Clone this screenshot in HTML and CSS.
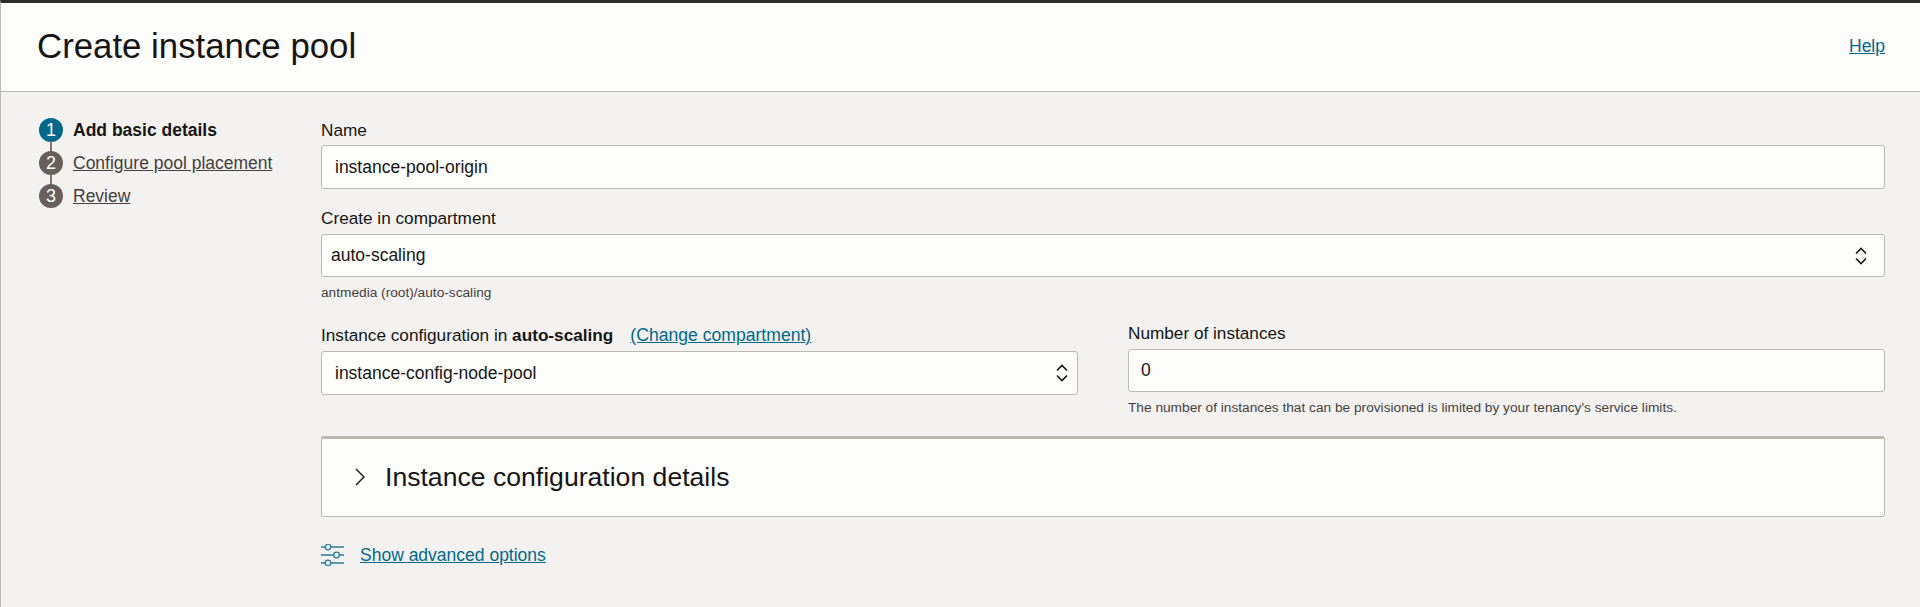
FILE: index.html
```html
<!DOCTYPE html>
<html lang="en">
<head>
<meta charset="utf-8">
<title>Create instance pool</title>
<link rel="stylesheet" href="styles.css">
</head>
<body>
<div class="page">
  <header class="header">
    <h1 class="title">Create instance pool</h1>
    <a class="link help" href="#">Help</a>
  </header>
  <main class="main">
    <nav class="steps">
      <div class="step current"><span class="num">1</span><span class="step-label">Add basic details</span></div>
      <div class="step"><span class="num">2</span><a class="step-label" href="#">Configure pool placement</a></div>
      <div class="step"><span class="num">3</span><a class="step-label" href="#">Review</a></div>
    </nav>
    <form class="form">
      <div class="field field-name">
        <div class="label">Name</div>
        <div class="box box-input">instance-pool-origin</div>
      </div>
      <div class="field field-comp">
        <div class="label">Create in compartment</div>
        <div class="box box-select">auto-scaling
          <svg class="updown" viewBox="0 0 12 18" width="12" height="18"><path d="M1 6.5l5-5 5 5M1 11.5l5 5 5-5" fill="none" stroke="#161513" stroke-width="1.6"/></svg>
        </div>
        <div class="hint">antmedia (root)/auto-scaling</div>
      </div>
      <div class="row">
        <div class="field col-left">
          <div class="label">Instance configuration in <b>auto-scaling</b><a class="link change" href="#">(Change compartment)</a></div>
          <div class="box box-input box-tall">instance-config-node-pool
            <svg class="updown" viewBox="0 0 12 18" width="12" height="18"><path d="M1 6.5l5-5 5 5M1 11.5l5 5 5-5" fill="none" stroke="#161513" stroke-width="1.6"/></svg>
          </div>
        </div>
        <div class="field col-right">
          <div class="label">Number of instances</div>
          <div class="box box-input">0</div>
          <div class="hint">The number of instances that can be provisioned is limited by your tenancy's service limits.</div>
        </div>
      </div>
      <section class="panel">
        <svg class="chev" viewBox="0 0 12 20" width="12" height="20"><path d="M2 2l8 8-8 8" fill="none" stroke="#161513" stroke-width="1.4"/></svg>
        <h2 class="panel-title">Instance configuration details</h2>
      </section>
      <div class="advanced">
        <svg class="sliders" viewBox="0 0 23 22" width="23" height="22">
          <g fill="none" stroke="#2a7c99" stroke-width="1.3">
            <path d="M0 3h4M10 3h13M0 11h12.500M18.500 11h4.500M0 19h4M10 19h13"/>
            <circle cx="7" cy="3" r="2.800"/><circle cx="15.500" cy="11" r="2.800"/><circle cx="7" cy="19" r="2.800"/>
          </g>
        </svg>
        <a class="link" href="#">Show advanced options</a>
      </div>
    </form>
  </main>
</div>
</body>
</html>
```
FILE: styles.css
```css
* { box-sizing: border-box; }
html, body { margin: 0; height: 100%; }
body {
  font-family: "Liberation Sans", Arial, sans-serif;
  font-size: 17.5px;
  color: #161513;
  background: #f3f2f1;
  overflow: hidden;
}
.page {
  height: 607px;
  border-top: 3px solid #312d2a;
  border-left: 1px solid #bcb8b3;
  display: flex;
  flex-direction: column;
}
.header {
  height: 89px;
  flex: none;
  background: #fdfdfc;
  border-bottom: 1px solid #bcb8b3;
  display: flex;
  align-items: center;
  justify-content: space-between;
  padding: 0 35px 2px 36px;
}
.title {
  margin: 0;
  font-size: 34.8px;
  font-weight: 400;
  line-height: 44px;
}
.link { color: #00688c; text-decoration: underline; }
.help { font-size: 17.5px; }
.main {
  flex: 1;
  display: flex;
  padding: 26px 35px 0 38px;
}
.steps {
  width: 282px;
  flex: none;
  display: flex;
  flex-direction: column;
}
.step {
  height: 33px;
  display: flex;
  align-items: flex-start;
  gap: 10px;
  position: relative;
}
.step:not(:last-child)::after {
  content: "";
  position: absolute;
  left: 11px;
  top: 23px;
  width: 2px;
  height: 11px;
  background: #7d7671;
}
.num {
  width: 24px;
  height: 24px;
  border-radius: 50%;
  background: #665f5b;
  color: #fff;
  font-size: 18px;
  line-height: 24px;
  text-align: center;
  flex: none;
}
.current .num { background: #00688c; }
.step-label { line-height: 24px; color: #44403c; font-size: 17.5px; white-space: nowrap; }
a.step-label { text-decoration: underline; }
.current .step-label { color: #161513; font-weight: 700; }
.form { flex: 1; display: flex; flex-direction: column; min-width: 0; margin-top: 1px; }
.label { font-size: 17.2px; line-height: 22px; white-space: nowrap; }
.field-name { display: flex; flex-direction: column; gap: 4px; }
.field-comp { margin-top: 18px; display: flex; flex-direction: column; gap: 5px; }
.box {
  height: 44px;
  background: #fdfdfc;
  border: 1px solid #bcb8b3;
  border-radius: 3px;
  display: flex;
  align-items: center;
  justify-content: space-between;
  font-size: 17.5px;
}
.box-input { padding: 0 9px 0 13px; }
.box-select { padding: 0 17px 0 9px; height: 43px; }
.hint { font-size: 13.7px; line-height: 16px; color: #46413d; }
.field-comp .hint { margin-top: 3px; }
.row { display: flex; gap: 50px; margin-top: 21px; }
.col-left { width: 757px; flex: none; padding-top: 2px; }
.col-right { flex: 1; min-width: 0; }
.col-left .box { margin-top: 5px; }
.col-right .box { margin-top: 5px; height: 43px; padding-left: 12px; }
.col-right .hint { margin-top: 8px; }
.change { margin-left: 17px; font-size: 17.6px; }
.panel {
  margin-top: 20px;
  height: 81px;
  background: #fdfdfc;
  border: 1px solid #bcb8b3;
  border-top: 3px solid #bcb8b3;
  border-radius: 3px;
  display: flex;
  align-items: center;
  padding: 0 0 1px 32px;
  gap: 19px;
}
.panel-title { margin: 0; font-size: 26.6px; font-weight: 400; }
.advanced { display: flex; align-items: center; gap: 16px; margin-top: 27px; }
.advanced .link { font-size: 17.5px; }
```
